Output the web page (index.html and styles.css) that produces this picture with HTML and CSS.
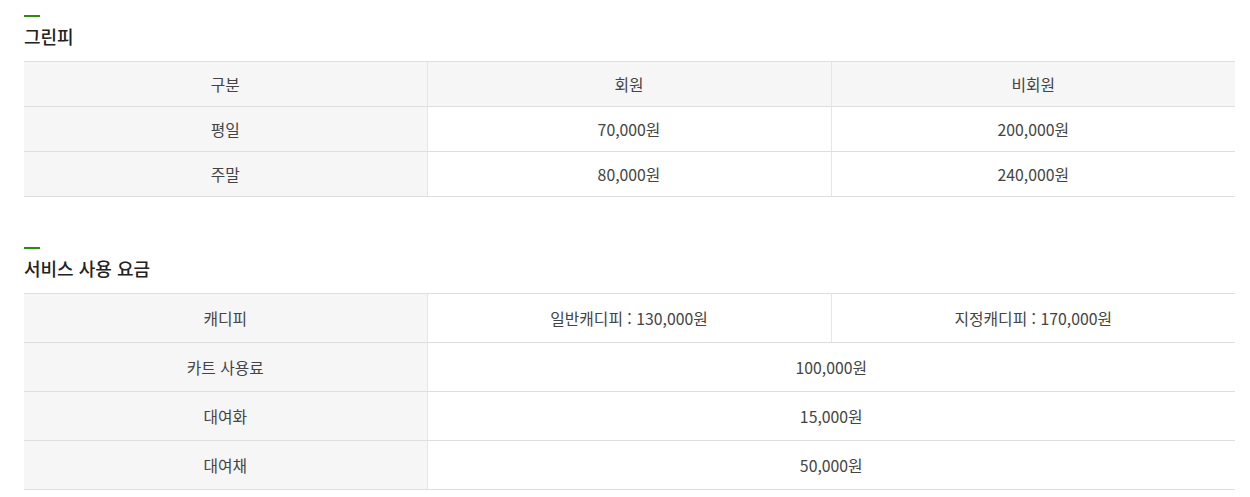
FILE: index.html
```html
<!DOCTYPE html>
<html lang="ko">
<head>
<meta charset="utf-8">
<link rel="stylesheet" href="styles.css">
</head>
<body>
<div class="wrap">
  <section class="sec">
    <h3 class="sec-title">그린피</h3>
    <table class="fee fee-green">
      <colgroup><col class="c1"><col class="c2"><col class="c3"></colgroup>
      <tbody>
        <tr><th>구분</th><th class="hd">회원</th><th class="hd">비회원</th></tr>
        <tr><th>평일</th><td>70,000원</td><td>200,000원</td></tr>
        <tr><th>주말</th><td>80,000원</td><td>240,000원</td></tr>
      </tbody>
    </table>
  </section>
  <section class="sec sec-2">
    <h3 class="sec-title">서비스 사용 요금</h3>
    <table class="fee fee-service">
      <colgroup><col class="c1"><col class="c2"><col class="c3"></colgroup>
      <tbody>
        <tr><th>캐디피</th><td>일반캐디피 : 130,000원</td><td>지정캐디피 : 170,000원</td></tr>
        <tr><th>카트 사용료</th><td colspan="2">100,000원</td></tr>
        <tr><th>대여화</th><td colspan="2">15,000원</td></tr>
        <tr><th>대여채</th><td colspan="2">50,000원</td></tr>
      </tbody>
    </table>
  </section>
</div>
</body>
</html>
```

FILE: styles.css
```css
* { box-sizing: border-box; }
html, body { margin: 0; padding: 0; background: #fff; }
body {
  font-family: "Noto Sans CJK KR", "Noto Sans", sans-serif;
  color: #444;
}
.wrap {
  width: 1211px;
  margin-left: 24px;
  padding-top: 15px;
}
.sec-2 { margin-top: 50px; }
.sec-title {
  margin: 0 0 12px;
  font-size: 18px;
  line-height: 26px;
  font-weight: 500;
  color: #222;
}
.sec-title::before {
  content: "";
  display: block;
  width: 16px;
  height: 2px;
  background: #2e8b0e;
  margin-bottom: 6px;
}
.fee {
  width: 100%;
  border-collapse: collapse;
  table-layout: fixed;
  font-size: 15.8px;
}
.c1 { width: 403px; }
.c2 { width: 404px; }
.c3 { width: 404px; }
.fee th, .fee td {
  text-align: center;
  font-weight: 400;
  color: #444;
  border-top: 1px solid #dedede;
  border-bottom: 1px solid #dedede;
  border-left: 1px solid #e6e6e6;
  padding: 0;
}
.fee tr > :first-child { border-left: 0; }
.fee th { background: #f6f6f6; }
.fee th.hd { background: #f6f6f6; }
.fee-green th, .fee-green td { height: 45px; }
.fee-service th, .fee-service td { height: 49px; }
```
